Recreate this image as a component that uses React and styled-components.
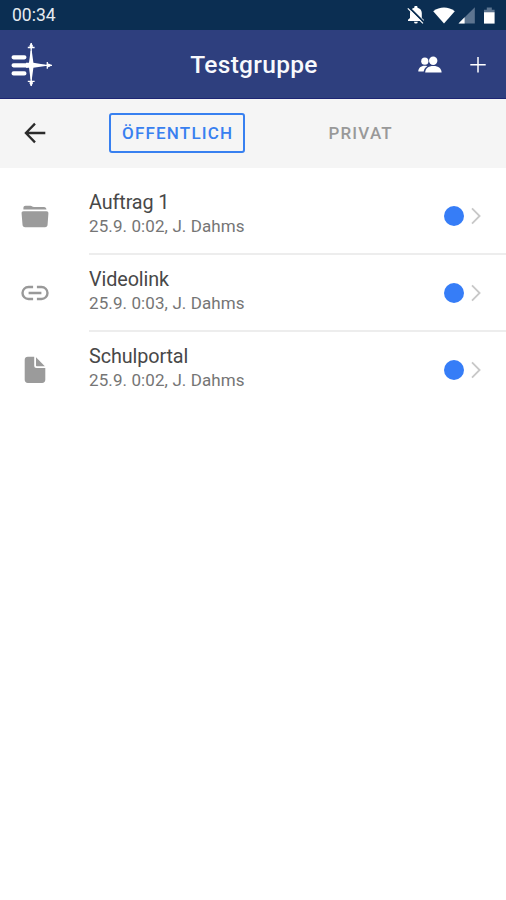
import React from 'react';
import styled, { createGlobalStyle } from 'styled-components';

const items = [
    { title: 'Auftrag 1', info: '25.9. 0:02, J. Dahms', Icon: FolderIcon },
    { title: 'Videolink', info: '25.9. 0:03, J. Dahms', Icon: LinkIcon },
    { title: 'Schulportal', info: '25.9. 0:02, J. Dahms', Icon: DocumentIcon },
];

const App = () => {
    return (
        <Container>
            <GlobalStyle />
            <StatusBar>
                <Clock>00:34</Clock>
                <StatusIcons />
            </StatusBar>
            <Header>
                <HeaderSide>
                    <Logo />
                </HeaderSide>
                <Title>Testgruppe</Title>
                <HeaderSide $end>
                    <PeopleIcon />
                    <AddIcon />
                </HeaderSide>
            </Header>
            <Toolbar>
                <BackButton aria-label="Zurück">
                    <BackIcon />
                </BackButton>
                <Tabs>
                    <Tab $active>ÖFFENTLICH</Tab>
                    <Tab>PRIVAT</Tab>
                </Tabs>
            </Toolbar>
            <List>
                {items.map(({ title, info, Icon }) => (
                    <Row key={title}>
                        <IconBox>
                            <Icon />
                        </IconBox>
                        <RowBody>
                            <div className="text">
                                <h2>{title}</h2>
                                <p>{info}</p>
                            </div>
                            <Dot />
                            <Chevron />
                        </RowBody>
                    </Row>
                ))}
            </List>
        </Container>
    );
}

export default App;

function StatusIcons() {
    return (
        <svg width="90" height="20" viewBox="406 6 90 20">
            <path fill="#fff" d="M408 21v-1.200l2-1.900V13c0-2.700 1.700-4.700 4.300-5.300v-.4a1.600 1.600 0 0 1 3.200 0v.4c2.600.6 4.300 2.600 4.300 5.300v4.900l2 1.900V21zM414 21.700h3.800a1.900 1.900 0 0 1-3.800 0z" />
            <path stroke="#0b2e52" strokeWidth="2" d="M409 7.400 424.300 22.700" />
            <path stroke="#fff" strokeWidth="1.200" d="M407.800 8.400 423 23.400" />
            <path fill="#fff" d="M433.200 11.200c6.400-5 15.200-5 21.600 0L444 23.600z" />
            <path fill="#5d7590" d="M474.800 7.200v16.200h-16.300z" />
            <path fill="#fff" d="M464.600 17.300v6.100h-6.100z" />
            <path fill="#5d7590" d="M484 12.200V9.800h2.800V7.600h5v2.200h2.800v2.400z" />
            <path fill="#fff" d="M484 12.200h10.600v11.400H484z" />
        </svg>
    );
}

function Logo() {
    return (
        <svg width="42" height="46" viewBox="10 42 42 46" fill="none" stroke="#fff">
            <path strokeWidth="4.200" strokeLinecap="round" d="M13.600 57.300h10.800M13.600 65.300h14M13.600 73.400h10.800" />
            <path strokeWidth="1.300" d="M31.200 43v43M28 65.300h24M27.800 47.500h6.800M27.800 81.400h6.800M47.300 61.900v6.800" />
            <path fill="#fff" stroke="none" d="M30.600 51h1.200l1.600 11.800 12 1.900v1.200l-12 1.900-1.600 11.600h-1.200L29 67.800h-3v-5h3z" />
            <path fill="#fff" stroke="none" d="m31.200 42.800 1.900 3.200-1.900 3-1.900-3zM31.200 80l1.900 3-1.900 3.200-1.900-3.200zM45.700 65.300l3-1.900 3.200 1.900-3.200 1.900z" />
        </svg>
    );
}

function PeopleIcon() {
    return (
        <svg width="24" height="18" viewBox="418 56 24 18" fill="#fff">
            <circle cx="424.800" cy="61.200" r="3.600" />
            <path d="M418.300 71.600c0-3.600 2.600-5.800 6.400-5.800 1 0 1.900.1 2.600.4-2.100 1.200-3.400 3.100-3.600 5.400z" />
            <circle cx="433.200" cy="60.700" r="4.200" />
            <path d="M425.200 72.600c0-4.200 3-6.700 8.200-6.700s8.200 2.500 8.200 6.700z" />
        </svg>
    );
}

function AddIcon() {
    return (
        <svg width="18" height="18" viewBox="0 0 18 18" stroke="#fff" strokeWidth="1.500">
            <path d="M9 1v15.400M1.300 8.700h15.400" />
        </svg>
    );
}

function BackIcon() {
    return (
        <svg width="22" height="22" viewBox="0 0 22 22" fill="none" stroke="#2b2b2b" strokeWidth="2.300">
            <path d="M11 1.600 1.900 11l9.100 9.400M2 11h19.300" />
        </svg>
    );
}

function FolderIcon() {
    return (
        <svg width="28" height="24" viewBox="0 0 28 24" fill="#9b9b9b">
            <path d="M2.400 5.600V4c0-1.300.9-2.200 2.200-2.200h4.800c1.600 0 2 1.300 3.600 1.300h10c1.500 0 2.300.9 2.500 2.500z" />
            <path d="M.6 9.500c-.2-1.400.6-2.200 1.900-2.200h23c1.300 0 2 .8 1.900 2.200l-.8 11.100c-.1 1.700-1 2.700-2.700 2.700H4.200c-1.700 0-2.600-1-2.700-2.700z" />
        </svg>
    );
}

function LinkIcon() {
    return (
        <svg width="28" height="16" viewBox="0 0 28 16" fill="none" stroke="#999" strokeWidth="2.400">
            <path d="M12.100 2H7.500a6 6 0 0 0 0 12h4.600M15.900 2h4.600a6 6 0 0 1 0 12h-4.600M7.600 8h12.800" />
        </svg>
    );
}

function DocumentIcon() {
    return (
        <svg width="22" height="28" viewBox="0 0 22 28" fill="#9b9b9b">
            <path d="M.7 4C.7 2 1.900.8 3.900.8h6.300v8.600c0 1.700.8 2.500 2.500 2.500h8.600v11.900c0 2-1.200 3.200-3.200 3.200H3.900c-2 0-3.200-1.200-3.200-3.200z" />
            <path d="M12 1.300 20.800 10.200h-8c-.5 0-.8-.3-.8-.8z" />
        </svg>
    );
}

function Chevron() {
    return (
        <svg width="12" height="18" viewBox="0 0 12 18" fill="none" stroke="#c8c8c8" strokeWidth="1.800">
            <path d="m2 1.300 7.600 7.700L2 16.700" />
        </svg>
    );
}

const GlobalStyle = createGlobalStyle`
    * {
        box-sizing: border-box;
    }

    body {
        margin: 0;
        background: #fff;
        font-family: Roboto, sans-serif;
    }

    svg {
        display: block;
        flex-shrink: 0;
    }
`;

const Container = styled.div`
    width: 506px;
    height: 900px;
    background-color: #fff;
    overflow: hidden;
`;

const StatusBar = styled.div`
    display: flex;
    align-items: center;
    justify-content: space-between;
    height: 30px;
    padding: 2px 10px 0 12px;
    background: #0b2e52;
`;

const Clock = styled.span`
    padding-bottom: 2px;
    font-size: 17.5px;
    line-height: 20px;
    color: #e6ebf0;
`;

const Header = styled.header`
    display: flex;
    align-items: center;
    height: 69px;
    padding: 2px 19px 0 10px;
    background: #2e3f7e;
    border-bottom: 1px solid #1d2573;
`;

const HeaderSide = styled.div`
    display: flex;
    align-items: center;
    justify-content: ${({ $end }) => ($end ? 'flex-end' : 'flex-start')};
    gap: 27px;
    width: ${({ $end }) => ($end ? '139px' : '150px')};
`;

const Title = styled.h1`
    flex: 1;
    margin: 0;
    text-align: center;
    font-weight: 500;
    font-size: 24.5px;
    line-height: 30px;
    letter-spacing: 0.3px;
    color: #f8f9fc;
`;

const Toolbar = styled.div`
    display: flex;
    align-items: center;
    height: 69px;
    padding: 0 0 1px 24px;
    background: #f5f5f5;
`;

const BackButton = styled.button`
    padding: 0;
    border: none;
    background: none;
    cursor: pointer;
`;

const Tabs = styled.div`
    display: flex;
    gap: 70px;
    margin-left: 63px;
`;

const Tab = styled.button`
    height: 40px;
    padding: 0 10px 0 11px;
    border: 2px solid ${({ $active }) => ($active ? '#3880f0' : 'transparent')};
    border-radius: 3px;
    background: none;
    font-family: inherit;
    font-weight: 500;
    font-size: 17px;
    letter-spacing: 1.2px;
    color: ${({ $active }) => ($active ? '#3880f0' : '#999')};
    cursor: pointer;
`;

const List = styled.div`
    padding-top: 10px;
`;

const Row = styled.div`
    display: flex;
    height: 77px;
`;

const IconBox = styled.div`
    display: flex;
    align-items: center;
    justify-content: center;
    width: 69px;
    margin-right: 20px;
    padding-bottom: 2px;
`;

const RowBody = styled.div`
    flex: 1;
    display: flex;
    align-items: center;
    padding-right: 24px;
    border-bottom: 2px solid #ededed;

    ${Row}:last-child & {
        border-bottom-color: transparent;
    }

    .text {
        flex: 1;
        padding-bottom: 3px;
    }

    h2 {
        margin: 0;
        font-weight: 400;
        font-size: 19.8px;
        line-height: 24px;
        letter-spacing: -0.1px;
        color: #484848;
    }

    p {
        margin: 0;
        font-weight: 400;
        font-size: 17px;
        line-height: 23px;
        letter-spacing: 0.1px;
        color: #757575;
    }
`;

const Dot = styled.span`
    width: 20px;
    height: 20px;
    margin-right: 6px;
    border-radius: 50%;
    background: #367df7;
`;
